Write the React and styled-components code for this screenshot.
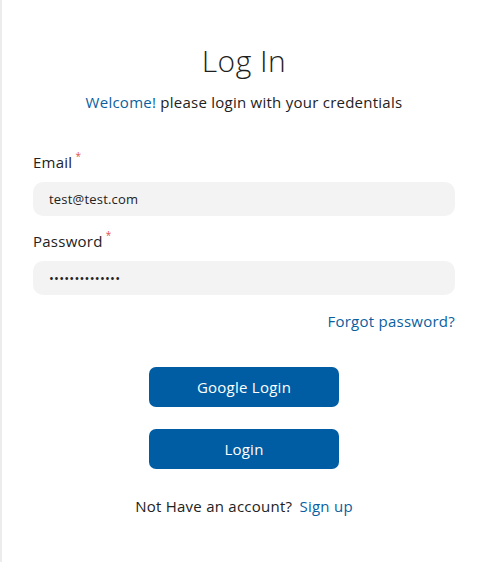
import React from 'react'
import styled, { createGlobalStyle } from 'styled-components'

const GlobalStyle = createGlobalStyle`
  html, body {
    margin: 0;
    padding: 0;
    background: #ffffff;
  }
  body {
    font-family: 'Open Sans', 'Noto Sans', sans-serif;
    color: #222222;
    letter-spacing: 0.25px;
  }
`

const App = () => (
  <>
    <GlobalStyle />
    <Page>
      <Header>
        <Title>Log In</Title>
        <Subtitle>
          <Accent>Welcome!</Accent> please login with your credentials
        </Subtitle>
      </Header>
      <Form onSubmit={e => e.preventDefault()}>
        <Field>
          <Label>
            Email<Required>*</Required>
          </Label>
          <Input type="email" defaultValue="test@test.com" />
        </Field>
        <Field>
          <Label>
            Password<Required>*</Required>
          </Label>
          <Input type="password" defaultValue="testpassword12" />
        </Field>
        <ForgotRow>
          <TextLink href="#">Forgot password?</TextLink>
        </ForgotRow>
        <Actions>
          <Button type="button">Google Login</Button>
          <Button type="submit">Login</Button>
        </Actions>
        <Footer>
          Not Have an account? <SignUp href="#">Sign up</SignUp>
        </Footer>
      </Form>
    </Page>
  </>
)

export default App

const Page = styled.div`
  box-sizing: border-box;
  min-height: 562px;
  border-left: 2px solid #ececec;
  padding: 41px 28px 0 31px;
`

const Header = styled.div`
  text-align: center;
`

const Title = styled.h1`
  margin: 0;
  font-size: 30px;
  font-weight: 300;
  line-height: 40px;
  letter-spacing: 0.5px;
  color: #1f1f1f;
`

const Subtitle = styled.p`
  margin: 11px 0 0;
  font-size: 15px;
  line-height: 20px;
  color: #222222;
`

const Accent = styled.span`
  color: #0a5fa0;
`

const Form = styled.form`
  margin-top: 39px;
  display: flex;
  flex-direction: column;
`

const Field = styled.div`
  display: flex;
  flex-direction: column;
  margin-bottom: 14px;
`

const Label = styled.label`
  font-size: 15px;
  line-height: 22px;
  margin-bottom: 9px;
  color: #222222;
`

const Required = styled.sup`
  color: #e0524a;
  font-size: 10px;
  margin-left: 3px;
  vertical-align: 8px;
  line-height: 0;
`

const Input = styled.input`
  box-sizing: border-box;
  height: 34px;
  border: none;
  border-radius: 10px;
  background: #f3f3f3;
  padding: 0 16px;
  font-family: inherit;
  font-size: 13px;
  letter-spacing: 0.2px;
  color: #222222;
  outline: none;
`

const ForgotRow = styled.div`
  display: flex;
  justify-content: flex-end;
  margin-top: 1px;
  font-size: 15px;
  line-height: 22px;
`

const TextLink = styled.a`
  color: #0a5fa0;
  text-decoration: none;
`

const SignUp = styled(TextLink)`
  margin-left: 3px;
`

const Actions = styled.div`
  display: flex;
  flex-direction: column;
  align-items: center;
  gap: 22px;
  margin-top: 35px;
`

const Button = styled.button`
  width: 190px;
  height: 40px;
  border: none;
  border-radius: 7px;
  background: #005da3;
  color: #ffffff;
  font-family: inherit;
  font-size: 15px;
  font-weight: 500;
  letter-spacing: 0.25px;
  cursor: pointer;
`

const Footer = styled.p`
  margin: 26px 0 0;
  text-align: center;
  font-size: 15px;
  line-height: 22px;
  color: #222222;
`
